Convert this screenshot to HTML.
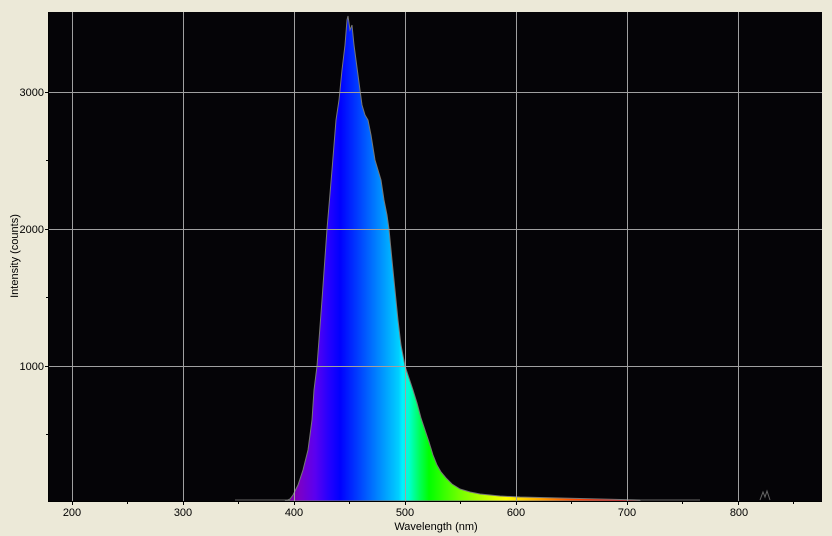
<!DOCTYPE html>
<html><head><meta charset="utf-8"><style>
html,body{margin:0;padding:0;background:#ece9d8;}
svg{display:block;font-family:"Liberation Sans",sans-serif;}
</style></head><body>
<svg width="832" height="536" viewBox="0 0 832 536" xmlns="http://www.w3.org/2000/svg">
<defs>
<linearGradient id="g" gradientUnits="userSpaceOnUse" x1="285" y1="0" x2="620" y2="0">
<stop offset="0" stop-color="#800090"/>
<stop offset="0.045" stop-color="#7a00c8"/>
<stop offset="0.09" stop-color="#5a00f0"/>
<stop offset="0.135" stop-color="#2000ff"/>
<stop offset="0.165" stop-color="#0000ff"/>
<stop offset="0.22" stop-color="#0040ff"/>
<stop offset="0.30" stop-color="#00a0ff"/>
<stop offset="0.34" stop-color="#00d0ff"/>
<stop offset="0.35" stop-color="#00f0ff"/>
<stop offset="0.37" stop-color="#00ffd0"/>
<stop offset="0.40" stop-color="#00ff60"/>
<stop offset="0.43" stop-color="#00ff00"/>
<stop offset="0.52" stop-color="#70ff00"/>
<stop offset="0.60" stop-color="#c0ff00"/>
<stop offset="0.66" stop-color="#ffff00"/>
<stop offset="0.75" stop-color="#ffb000"/>
<stop offset="0.85" stop-color="#ff5000"/>
<stop offset="1" stop-color="#ff0000"/>
</linearGradient>
</defs>
<rect x="49" y="12" width="773" height="489" fill="#050407"/>
<path d="M285,501 L290,499 293,495 298,485 303,470 308,450 312,420 314,390 317,366 322,300 327,229 332,170 336,120 339,100 342,70 345,45 347,20 348,16 350,30 352,25 354,45 356,60 358,75 360,90 362,105 365,115 368,120 371,135 375,160 378,170 381,180 384,200 387,215 389,229 392,260 395,290 398,320 401,345 405,366 409,378 413,390 417,403 421,418 425,430 429,442 433,455 437,465 441,472 446,478 452,484 460,489 470,492 480,494 500,496 520,497 560,498 600,499 640,500 L640,501 Z" fill="url(#g)" stroke="#777" stroke-width="1"/>
<path d="M235,500 H290 M640,500 H700 M760,500 l3,-8 2,5 2,-6 3,9" stroke="#666" fill="none" stroke-width="1"/>
<g stroke="#a0a0a0" stroke-width="1">
<path d="M72.5,12V501 M183.5,12V501 M294.5,12V501 M405.5,12V501 M516.5,12V501 M627.5,12V501 M738.5,12V501"/>
<path d="M49,92.5H822 M49,229.5H822 M49,366.5H822"/>
</g>
<g stroke="#000" stroke-width="1">
<path d="M49,501.5H822 M48.5,12V502"/>
<path d="M72.5,501V505 M127.5,501V504 M183.5,501V505 M238.5,501V504 M294.5,501V505 M349.5,501V504 M405.5,501V505 M460.5,501V504 M516.5,501V505 M571.5,501V504 M627.5,501V505 M682.5,501V504 M738.5,501V505 M793.5,501V504"/>
<path d="M45,92.5H49 M46,160.5H49 M45,229.5H49 M46,297.5H49 M45,366.5H49 M46,434.5H49"/>
</g>
<g font-size="11" fill="#000" text-anchor="middle">
<text x="72" y="516">200</text><text x="183" y="516">300</text><text x="294" y="516">400</text>
<text x="405" y="516">500</text><text x="516" y="516">600</text><text x="627" y="516">700</text>
<text x="739" y="516">800</text>
<text x="436" y="530">Wavelength (nm)</text>
</g>
<g font-size="11" fill="#000" text-anchor="end">
<text x="44" y="96">3000</text><text x="44" y="233">2000</text><text x="44" y="370">1000</text>
</g>
<text font-size="11" fill="#000" text-anchor="middle" transform="translate(18,256) rotate(-90)">Intensity (counts)</text>
</svg>
</body></html>
